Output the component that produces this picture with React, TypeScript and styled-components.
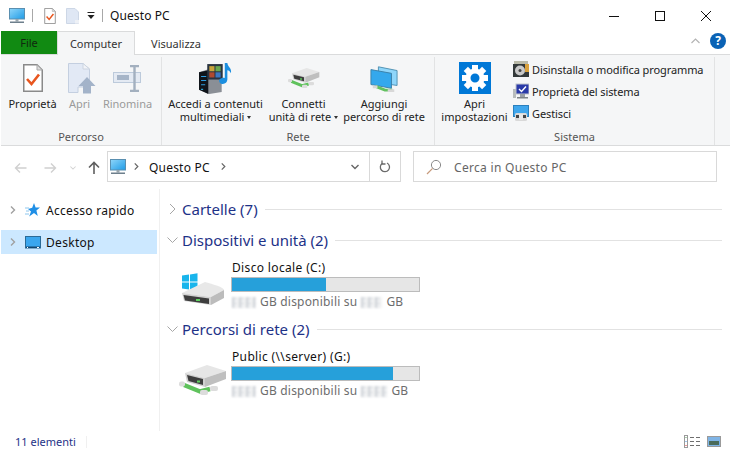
import styled, { createGlobalStyle } from 'styled-components';

const GlobalStyle = createGlobalStyle`
  html, body {
    margin: 0;
    padding: 0;
    background: #fff;
  }
  * {
    box-sizing: border-box;
  }
`;

const Window = styled.div`
  width: 730px;
  height: 454px;
  overflow: hidden;
  display: flex;
  flex-direction: column;
  background: #fff;
  color: #222;
  font-family: "Noto Sans", "Open Sans", sans-serif;
  font-size: 11px;
`;

const TitleBar = styled.div`
  height: 31px;
  display: flex;
  align-items: center;
  padding-left: 9px;
`;

const QuickSep = styled.div<{ $gap?: number }>`
  width: 1px;
  height: 13px;
  background: #a8a8a8;
  margin: 0 ${(p) => p.$gap ?? 11}px 0 7px;
`;

const QuickSlot = styled.span<{ $right: number }>`
  display: flex;
  margin-right: ${(p) => p.$right}px;
`;

const TitleText = styled.span`
  font-size: 12px;
  color: #111;
  letter-spacing: 0.1px;
`;

const WindowControls = styled.div`
  margin-left: auto;
  display: flex;
  height: 100%;
  padding-right: 1px;
`;

const WindowButton = styled.div`
  width: 46px;
  display: flex;
  align-items: center;
  justify-content: center;
`;

const TabRow = styled.div`
  height: 24px;
  display: flex;
  padding-left: 1px;
  position: relative;
`;

const FileTab = styled.div`
  width: 56px;
  height: 23px;
  background: #118a12;
  display: flex;
  align-items: center;
  justify-content: center;
  color: #10290f;
`;

const Tab = styled.div<{ $active?: boolean }>`
  width: ${(p) => (p.$active ? 78 : 82)}px;
  height: 24px;
  display: flex;
  align-items: center;
  justify-content: center;
  color: #333;
  background: ${(p) => (p.$active ? '#f5f6f7' : 'transparent')};
  border: 1px solid ${(p) => (p.$active ? '#dadbdc' : 'transparent')};
  border-bottom: 0;
  position: relative;
  z-index: 1;
`;

const TabRight = styled.div`
  margin-left: auto;
  display: flex;
  align-items: center;
  gap: 10px;
  padding: 0 4px 4px 0;
`;

const Ribbon = styled.div`
  height: 92px;
  margin-top: -1px;
  background: #f5f6f7;
  border-top: 1px solid #dadbdc;
  border-bottom: 1px solid #dadbdc;
  margin-left: 1px;
  display: flex;
  padding-top: 2px;
`;

const Group = styled.div<{ $width: number }>`
  width: ${(p) => p.$width}px;
  height: 88px;
  display: flex;
  flex-direction: column;
  border-right: 1px solid #e2e3e4;
`;

const GroupBody = styled.div<{ $pad?: number }>`
  flex: 1;
  display: flex;
  padding-left: ${(p) => p.$pad ?? 0}px;
`;

const GroupLabel = styled.div`
  height: 16px;
  text-align: center;
  color: #555;
  line-height: 16px;
`;

const BigButton = styled.div<{ $width: number; $disabled?: boolean }>`
  width: ${(p) => p.$width}px;
  display: flex;
  flex-direction: column;
  align-items: center;
  padding-top: 5px;
  color: ${(p) => (p.$disabled ? '#9a9a9a' : '#222')};
`;

const BigIcon = styled.div<{ $shift?: number }>`
  height: 32px;
  display: flex;
  align-items: center;
  justify-content: center;
  margin-bottom: 3px;
  margin-left: ${(p) => p.$shift ?? 0}px;
`;

const BigLabel = styled.div`
  text-align: center;
  line-height: 13px;
  white-space: nowrap;
`;

const Caret = styled.span`
  display: inline-block;
  width: 0;
  height: 0;
  margin-left: 3px;
  vertical-align: 2px;
  border-left: 2.5px solid transparent;
  border-right: 2.5px solid transparent;
  border-top: 3px solid #333;
`;

const SmallList = styled.div`
  display: flex;
  flex-direction: column;
  padding-top: 4px;
  gap: 6px;
`;

const SmallItem = styled.div`
  display: flex;
  align-items: center;
  gap: 3px;
  height: 16px;
  white-space: nowrap;
  letter-spacing: -0.1px;
`;

const NavBar = styled.div`
  height: 43px;
  display: flex;
  align-items: center;
  padding: 0 13px 2px 0;
`;

const NavButtons = styled.div`
  width: 107px;
  display: flex;
  align-items: center;
  padding: 2px 0 0 13px;
`;

const NavSlot = styled.div<{ $width: number; $left?: number }>`
  width: ${(p) => p.$width}px;
  margin-left: ${(p) => p.$left ?? 0}px;
  display: flex;
  justify-content: center;
`;

const AddressBox = styled.div`
  width: 294px;
  height: 31px;
  border: 1px solid #d9d9d9;
  display: flex;
  align-items: center;
  padding: 0 0 0 2px;
`;

const AddressChevron = styled.span<{ $left: number }>`
  display: flex;
  margin-left: ${(p) => p.$left}px;
`;

const Crumb = styled.span`
  font-size: 12px;
  color: #111;
  letter-spacing: 0.2px;
  margin: 1px 0 0 9px;
`;

const AddressEnd = styled.div`
  margin-left: auto;
  display: flex;
  height: 100%;
  align-items: center;
`;

const AddressSlot = styled.div<{ $divided?: boolean }>`
  width: ${(p) => (p.$divided ? 31 : 28)}px;
  height: 100%;
  display: flex;
  align-items: center;
  justify-content: center;
  border-left: ${(p) => (p.$divided ? '1px solid #d9d9d9' : '0')};
`;

const SearchBox = styled.div`
  margin-left: 12px;
  flex: 1;
  height: 31px;
  border: 1px solid #d9d9d9;
  display: flex;
  align-items: center;
  padding: 1px 0 0 12px;
  gap: 12px;
  font-size: 12px;
  letter-spacing: 0.3px;
  color: #666;
`;

const Main = styled.div`
  flex: 1;
  display: flex;
  min-height: 0;
`;

const Sidebar = styled.div`
  width: 160px;
  border-right: 1px solid #f0f0f0;
  padding: 9px 2px 0 1px;
`;

const TreeRow = styled.div<{ $selected?: boolean }>`
  height: 24px;
  display: flex;
  align-items: center;
  padding-left: 8px;
  margin-bottom: 8px;
  font-size: 12px;
  letter-spacing: 0.3px;
  color: #111;
  background: ${(p) => (p.$selected ? '#cce8ff' : 'transparent')};
`;

const TreeIcon = styled.span`
  width: 17px;
  margin-left: 7px;
  margin-right: 5px;
  display: flex;
  justify-content: center;
`;

const Content = styled.div`
  flex: 1;
  padding: 10px 8px 0 7px;
`;

const SectionHead = styled.div`
  height: 20px;
  display: flex;
  align-items: center;
  font-size: 15px;
  color: #1e3287;
  white-space: nowrap;
`;

const SectionChevron = styled.span`
  width: 11px;
  margin-right: 4px;
  display: flex;
  justify-content: center;
`;

const SectionTitle = styled.span`
  margin-right: 7px;
`;

const SectionRule = styled.div`
  flex: 1;
  height: 1px;
  background: #e2e2e2;
`;

const SectionGap = styled.div`
  height: 11px;
`;

const Drive = styled.div`
  display: flex;
  padding: 8px 0 0 6px;
  height: 69px;
`;

const DriveIcon = styled.div<{ $left: number; $top: number }>`
  width: 58px;
  padding-left: ${(p) => p.$left}px;
  padding-top: ${(p) => p.$top}px;
`;

const DriveInfo = styled.div`
  width: 189px;
  display: flex;
  flex-direction: column;
`;

const DriveName = styled.div`
  font-size: 12px;
  letter-spacing: 0.35px;
  color: #111;
  line-height: 19px;
  padding-left: 1px;
`;

const Bar = styled.div`
  height: 15px;
  flex: none;
  border: 1px solid #bcbcbc;
  background: #e6e6e6;
`;

const BarFill = styled.div`
  height: 100%;
  background: #26a0da;
`;

const DriveSpace = styled.div`
  display: flex;
  align-items: center;
  gap: 4px;
  padding-left: 1px;
  font-size: 12px;
  letter-spacing: 0.2px;
  color: #6d6d6d;
  line-height: 20px;
`;

const Redacted = styled.span<{ $w: number }>`
  display: inline-block;
  width: ${(p) => p.$w}px;
  height: 11px;
  background-color: #e4e7ea;
  background-image:
    linear-gradient(90deg, #cfd3d8 33%, transparent 33%, transparent 66%, #f4f4f4 66%),
    linear-gradient(0deg, rgba(255, 255, 255, 0.5) 50%, transparent 50%);
  background-size: 7px 7px, 5px 5px;
  filter: blur(0.8px);
`;

const StatusBar = styled.div`
  height: 23px;
  display: flex;
  align-items: center;
  padding: 0 9px 2px 15px;
  color: #1e3287;
`;

const StatusSep = styled.div`
  width: 1px;
  height: 12px;
  margin-left: 10px;
  background: #f0f0f0;
`;

const StatusRight = styled.div`
  margin-left: auto;
  display: flex;
  align-items: center;
  gap: 7px;
`;

const HelpBadge = styled.div`
  width: 16px;
  height: 16px;
  border-radius: 50%;
  background: #0a62b5;
  color: #fff;
  font-weight: 700;
  font-size: 12px;
  line-height: 16px;
  text-align: center;
`;

const MonitorIcon = () => (
  <svg width="16" height="16" viewBox="0 0 16 16">
    <defs>
      <linearGradient id="mon" x1="0" y1="0" x2="1" y2="1">
        <stop offset="0" stopColor="#8fd6fa" />
        <stop offset="1" stopColor="#1e9be6" />
      </linearGradient>
    </defs>
    <rect x="0.5" y="0.5" width="15" height="10.5" fill="url(#mon)" stroke="#5a8fb0" />
    <rect x="6.5" y="11" width="3" height="2.5" fill="#9aa6ad" />
    <rect x="1" y="13.5" width="14" height="1.5" fill="#6d7f8c" />
  </svg>
);

const DocCheck = ({ w, h }: { w: number; h: number }) => (
  <svg width={w} height={h} viewBox="0 0 20 28">
    <path d="M0.75 0.75H14L19.25 6V27.25H0.75Z" fill="#fff" stroke="#8a8a8a" strokeWidth="1.5" />
    <path d="M14 0.75V6H19.25Z" fill="#dcdcdc" stroke="#a8a8a8" />
    <path d="M4 15L8.5 20L16 10.5" fill="none" stroke="#e8561f" strokeWidth="2.6" />
  </svg>
);

const QuickBlank = () => (
  <svg width="13" height="16" viewBox="0 0 13 16">
    <path d="M0.5 0.5H9L12.5 4V15.5H0.5Z" fill="#dfe7f4" stroke="#cdd7e6" />
    <path d="M9 12H13V15.5H9Z" fill="#eef1f6" />
  </svg>
);

const QuickCaret = () => (
  <svg width="8" height="8" viewBox="0 0 8 8">
    <rect x="0.5" y="0" width="7" height="1" fill="#222" />
    <path d="M0.5 3H7.5L4 7Z" fill="#222" />
  </svg>
);

const OpenIcon = () => (
  <svg width="28" height="31" viewBox="0 0 28 31">
    <path d="M0.5 0.5H15L21.5 6V24H10V29.5H0.5Z" fill="#e2e9f5" stroke="#c4cfe0" />
    <path d="M15 0.5V6H21.5Z" fill="#f2f4f8" stroke="#ccd4e0" />
    <path d="M19 14L27.5 23H23V30.5H15V23H10.5Z" fill="#a3b3c9" />
  </svg>
);

const RenameIcon = () => (
  <svg width="29" height="27" viewBox="0 0 29 27">
    <rect x="0.5" y="7.5" width="27" height="10" fill="#e4eaf3" stroke="#bccadb" />
    <rect x="4" y="10" width="12" height="5" fill="#a6b5c8" />
    <path d="M17 1H26M17 26H26M21.5 1V26" stroke="#a3b0bf" strokeWidth="2.4" fill="none" />
  </svg>
);

const MediaIcon = () => (
  <svg width="33" height="31" viewBox="0 0 32 30">
    <path d="M0 9L9 6L22 11V28L10 30L0 26Z" fill="#8a8f96" />
    <path d="M0 9L9 7V30L0 26Z" fill="#10151b" />
    <path d="M2 13H7M2 17H7M2 21H6" stroke="#2f9de0" strokeWidth="1" />
    <rect x="2" y="25" width="2" height="1" fill="#35c0ff" />
    <rect x="8" y="1" width="15" height="15" fill="#2a3440" />
    <rect x="10" y="3" width="5" height="5" fill="#c8a43a" />
    <rect x="16" y="3" width="5" height="5" fill="#6aa84f" />
    <rect x="10" y="9" width="5" height="5" fill="#b04a2f" />
    <rect x="16" y="9" width="5" height="5" fill="#3c78c0" />
    <path d="M25 0H27.5C28 4 32 5 31 10C30 8 29 7 27.5 7V16C27.5 19 24.5 21 21.5 20C19 19 19 16 21 15C22.5 14 24 14 25 14.5Z" fill="#1c8fe0" />
  </svg>
);

const NetDiskIcon = ({ w, h }: { w: number; h: number }) => (
  <svg width={w} height={h} viewBox="0 0 48 30">
    <path d="M6 8L28 0L47 6L26 13Z" fill="#e6e6e6" />
    <path d="M6 8L26 13V22L8 17Z" fill="#d0d0d0" />
    <path d="M8 10L24 14V20L9.5 16Z" fill="#3e3e3e" />
    <path d="M26 13L47 6V14L26 22Z" fill="#bfbfbf" />
    <rect x="18" y="15.5" width="3" height="2" fill="#5fd35f" />
    <path d="M5 20L21 26.5L31 24" stroke="#5fc25c" strokeWidth="4.5" fill="none" />
    <rect x="0" y="16.5" width="6" height="5" rx="2" fill="#dcdcdc" />
    <rect x="21" y="25" width="8" height="5" rx="2" fill="#dcdcdc" />
    <rect x="31" y="21" width="8" height="5" rx="2" fill="#dcdcdc" />
  </svg>
);

const AddNetIcon = () => (
  <svg width="28" height="32" viewBox="0 -4 30 34">
    <path d="M9 1L29 5V21L9 18Z" fill="#8fd6fa" stroke="#4d8fb0" />
    <path d="M1 4L23 8V24L1 20Z" fill="#34a8ec" stroke="#3b7fa6" />
    <path d="M6 22L16 26H24" stroke="#62c060" strokeWidth="3" fill="none" />
    <rect x="3" y="21" width="5" height="3" fill="#d8d8d8" />
    <rect x="19" y="25" width="7" height="3" fill="#d8d8d8" />
  </svg>
);

const GearIcon = () => (
  <svg width="32" height="32" viewBox="0 0 32 32">
    <rect width="32" height="32" fill="#0078d7" />
    <g transform="translate(16 16)">
      {[0, 45, 90, 135, 180, 225, 270, 315].map((a) => (
        <rect key={a} x="-3" y="-13" width="6" height="7" fill="#fff" transform={`rotate(${a})`} />
      ))}
      <circle r="7" fill="none" stroke="#fff" strokeWidth="5" />
    </g>
  </svg>
);

const UninstallIcon = () => (
  <svg width="16" height="16" viewBox="0 0 16 16">
    <rect x="1" y="0" width="14" height="3" fill="#b9b9a8" />
    <rect x="0" y="3" width="16" height="13" fill="#33393a" />
    <rect x="12" y="3" width="4" height="8" fill="#d9a13c" />
    <circle cx="7" cy="9.5" r="5" fill="#c9c9c9" />
    <circle cx="7" cy="9.5" r="1.5" fill="#444" />
  </svg>
);

const SysPropIcon = () => (
  <svg width="16" height="16" viewBox="0 0 16 16">
    <rect x="0" y="6" width="3" height="9" fill="#b8bcbc" />
    <rect x="3" y="1" width="13" height="10" fill="#2a3aa8" stroke="#c0c4cc" />
    <path d="M6 6L8.5 8.5L13 3.5" stroke="#fff" strokeWidth="1.4" fill="none" />
    <rect x="7" y="11" width="5" height="3" fill="#9aa0a6" />
    <rect x="4" y="14" width="11" height="1.5" fill="#7e8488" />
  </svg>
);

const ManageIcon = () => (
  <svg width="16" height="16" viewBox="0 0 16 16">
    <rect x="0.5" y="0.5" width="15" height="11" fill="#3fa6ec" stroke="#2b80bd" />
    <rect x="2" y="8" width="12" height="8" rx="1.5" fill="#d9d9d9" />
    <rect x="3" y="10" width="10" height="3" fill="#444" />
    <rect x="6" y="9" width="4" height="6" fill="#e8e8e8" />
  </svg>
);

const Chevron = ({ dir, color = '#a0a0a0', size = 8 }: { dir: 'right' | 'down'; color?: string; size?: number }) => (
  <svg width={size} height={size} viewBox="0 0 8 8">
    <path d={dir === 'right' ? 'M2 0.5L5.5 4L2 7.5' : 'M0.5 2L4 5.5L7.5 2'} fill="none" stroke={color} strokeWidth="1.4" />
  </svg>
);

const SectionArrow = ({ open }: { open?: boolean }) => (
  <svg width="11" height="12" viewBox="0 0 11 12">
    <path d={open ? 'M0.5 3.5L5.5 8.5L10.5 3.5' : 'M3 1L8 6L3 11'} fill="none" stroke="#a6a6a6" strokeWidth="1" />
  </svg>
);

const BackIcon = () => (
  <svg width="13" height="12" viewBox="0 0 13 12">
    <path d="M12.5 6H1.5M6 1.5L1.5 6L6 10.5" fill="none" stroke="#d0d0d0" strokeWidth="1.4" />
  </svg>
);

const ForwardIcon = () => (
  <svg width="13" height="12" viewBox="0 0 13 12">
    <path d="M0.5 6H11.5M7 1.5L11.5 6L7 10.5" fill="none" stroke="#d0d0d0" strokeWidth="1.4" />
  </svg>
);

const ArrowUp = () => (
  <svg width="12" height="13" viewBox="0 0 12 13">
    <path d="M6 13V1.5M1 6.5L6 1.5L11 6.5" fill="none" stroke="#5f5f5f" strokeWidth="1.6" />
  </svg>
);

const RefreshIcon = () => (
  <svg width="12" height="13" viewBox="0 0 12 13">
    <path d="M3.5 3.2A4.6 4.6 0 1 0 8 3" fill="none" stroke="#6a6a6a" strokeWidth="1.3" />
    <path d="M3 0.5V4H6.5" fill="none" stroke="#6a6a6a" strokeWidth="1.3" />
  </svg>
);

const SearchIcon = () => (
  <svg width="16" height="16" viewBox="0 0 16 16">
    <circle cx="10" cy="6" r="4.6" fill="none" stroke="#8a8a8a" />
    <path d="M6.6 9.4L1 15" stroke="#c79a7c" strokeWidth="1.2" />
  </svg>
);

const StarIcon = () => (
  <svg width="15" height="14" viewBox="0 0 15 14">
    <path d="M9 0L10.6 4.6H15L11.4 7.6L12.8 13L9 10L4.2 13.6L6 8.4L3 6L7.2 4.8Z" fill="#1f8fe6" />
    <path d="M0 5H4M1 8H4M0 11H4" stroke="#8cc6ee" strokeWidth="1" />
  </svg>
);

const DesktopIcon = () => (
  <svg width="16" height="13" viewBox="0 0 16 13">
    <rect x="0.5" y="0.5" width="15" height="11.5" fill="#3aa6ee" stroke="#2a6a96" />
    <rect x="1" y="10.5" width="14" height="1.5" fill="#14466e" />
    <path d="M2 11.5H3M12 11.5H14" stroke="#fff" strokeWidth="1" />
  </svg>
);

const LocalDiskIcon = () => (
  <svg width="44" height="33" viewBox="0 0 44 33">
    <path d="M1 2.5L8 1.5V8.5H1ZM9 1.4L16.5 0.3V8.5H9ZM1 9.5H8V16.5L1 15.5ZM9 9.5H16.5V17.7L9 16.6Z" fill="#19b5ec" />
    <path d="M1 20L24 9Q43 14 43 17L30 24Z" fill="#e8e8e8" />
    <path d="M1 20L30 24V32L3 28Z" fill="#d2d2d2" />
    <path d="M2.5 22L28 25.5V31L4 27.5Z" fill="#3e3e3e" />
    <path d="M30 24L43 17V25L30 32Z" fill="#bcbcbc" />
    <rect x="15" y="26" width="4" height="2" fill="#5fd35f" />
  </svg>
);

const DetailsViewIcon = () => (
  <svg width="16" height="13" viewBox="0 0 16 13">
    <rect x="0.5" y="0.5" width="3" height="12" fill="#fff" stroke="#9a9a9a" />
    <rect x="1.5" y="2" width="1" height="1" fill="#5aa05a" />
    <rect x="1.5" y="6" width="1" height="1" fill="#3f8fe0" />
    <rect x="1.5" y="10" width="1" height="1" fill="#e03030" />
    <path d="M6 2.5H10M12 2.5H16M6 6.5H10M12 6.5H16M6 10.5H10M12 10.5H16" stroke="#6e6e6e" />
  </svg>
);

const TilesViewIcon = () => (
  <svg width="14" height="11" viewBox="0 0 14 11">
    <rect x="0.5" y="0.5" width="13" height="10" fill="#7fb4e6" stroke="#9a9a9a" />
    <rect x="2" y="5" width="10" height="4" fill="#4a6b5a" />
  </svg>
);

const CloseIcon = () => (
  <svg width="10" height="10" viewBox="0 0 10 10">
    <path d="M0 0L10 10M10 0L0 10" stroke="#111" strokeWidth="1" />
  </svg>
);

const MaximizeIcon = () => (
  <svg width="10" height="10" viewBox="0 0 10 10">
    <rect x="0.5" y="0.5" width="9" height="9" fill="none" stroke="#111" />
  </svg>
);

const MinimizeIcon = () => (
  <svg width="10" height="10" viewBox="0 0 10 10">
    <path d="M0 5.5H10" stroke="#111" />
  </svg>
);

const CollapseIcon = () => (
  <svg width="9" height="6" viewBox="0 0 9 6">
    <path d="M0.5 5L4.5 1L8.5 5" fill="none" stroke="#b4b4b4" strokeWidth="1.2" />
  </svg>
);

export default function App() {
  return (
    <Window>
      <GlobalStyle />
      <TitleBar>
        <MonitorIcon />
        <QuickSep />
        <QuickSlot $right={10}><DocCheck w={12} h={16} /></QuickSlot>
        <QuickSlot $right={8}><QuickBlank /></QuickSlot>
        <QuickCaret />
        <QuickSep $gap={7} />
        <TitleText>Questo PC</TitleText>
        <WindowControls>
          <WindowButton><MinimizeIcon /></WindowButton>
          <WindowButton><MaximizeIcon /></WindowButton>
          <WindowButton><CloseIcon /></WindowButton>
        </WindowControls>
      </TitleBar>

      <TabRow>
        <FileTab>File</FileTab>
        <Tab $active>Computer</Tab>
        <Tab>Visualizza</Tab>
        <TabRight>
          <CollapseIcon />
          <HelpBadge>?</HelpBadge>
        </TabRight>
      </TabRow>

      <Ribbon>
        <Group $width={161}>
          <GroupBody $pad={3}>
            <BigButton $width={57}>
              <BigIcon><DocCheck w={20} h={28} /></BigIcon>
              <BigLabel>Proprietà</BigLabel>
            </BigButton>
            <BigButton $width={37} $disabled>
              <BigIcon $shift={5}><OpenIcon /></BigIcon>
              <BigLabel>Apri</BigLabel>
            </BigButton>
            <BigButton $width={59} $disabled>
              <BigIcon><RenameIcon /></BigIcon>
              <BigLabel>Rinomina</BigLabel>
            </BigButton>
          </GroupBody>
          <GroupLabel>Percorso</GroupLabel>
        </Group>
        <Group $width={273}>
          <GroupBody $pad={2}>
            <BigButton $width={103}>
              <BigIcon><MediaIcon /></BigIcon>
              <BigLabel>Accedi a contenuti<br />multimediali<Caret /></BigLabel>
            </BigButton>
            <BigButton $width={73}>
              <BigIcon><NetDiskIcon w={32} h={20} /></BigIcon>
              <BigLabel>Connetti<br />unità di rete<Caret /></BigLabel>
            </BigButton>
            <BigButton $width={88}>
              <BigIcon><AddNetIcon /></BigIcon>
              <BigLabel>Aggiungi<br />percorso di rete</BigLabel>
            </BigButton>
          </GroupBody>
          <GroupLabel>Rete</GroupLabel>
        </Group>
        <Group $width={280}>
          <GroupBody $pad={1}>
            <BigButton $width={77}>
              <BigIcon><GearIcon /></BigIcon>
              <BigLabel>Apri<br />impostazioni</BigLabel>
            </BigButton>
            <SmallList>
              <SmallItem><UninstallIcon />Disinstalla o modifica programma</SmallItem>
              <SmallItem><SysPropIcon />Proprietà del sistema</SmallItem>
              <SmallItem><ManageIcon />Gestisci</SmallItem>
            </SmallList>
          </GroupBody>
          <GroupLabel>Sistema</GroupLabel>
        </Group>
      </Ribbon>

      <NavBar>
        <NavButtons>
          <NavSlot $width={15}><BackIcon /></NavSlot>
          <NavSlot $width={30} $left={7}><ForwardIcon /></NavSlot>
          <NavSlot $width={16}><Chevron dir="down" color="#d4d4d4" size={6} /></NavSlot>
          <NavSlot $width={26}><ArrowUp /></NavSlot>
        </NavButtons>
        <AddressBox>
          <MonitorIcon />
          <AddressChevron $left={7}><Chevron dir="right" color="#666" size={7} /></AddressChevron>
          <Crumb>Questo PC</Crumb>
          <AddressChevron $left={10}><Chevron dir="right" color="#666" size={7} /></AddressChevron>
          <AddressEnd>
            <AddressSlot><Chevron dir="down" color="#666" /></AddressSlot>
            <AddressSlot $divided><RefreshIcon /></AddressSlot>
          </AddressEnd>
        </AddressBox>
        <SearchBox>
          <SearchIcon />
          Cerca in Questo PC
        </SearchBox>
      </NavBar>

      <Main>
        <Sidebar>
          <TreeRow>
            <Chevron dir="right" />
            <TreeIcon><StarIcon /></TreeIcon>
            Accesso rapido
          </TreeRow>
          <TreeRow $selected>
            <Chevron dir="right" />
            <TreeIcon><DesktopIcon /></TreeIcon>
            Desktop
          </TreeRow>
        </Sidebar>
        <Content>
          <SectionHead>
            <SectionChevron><SectionArrow /></SectionChevron>
            <SectionTitle>Cartelle (7)</SectionTitle>
            <SectionRule />
          </SectionHead>
          <SectionGap />
          <SectionHead>
            <SectionChevron><SectionArrow open /></SectionChevron>
            <SectionTitle>Dispositivi e unità (2)</SectionTitle>
            <SectionRule />
          </SectionHead>
          <Drive>
            <DriveIcon $left={8} $top={15}><LocalDiskIcon /></DriveIcon>
            <DriveInfo>
              <DriveName>Disco locale (C:)</DriveName>
              <Bar><BarFill style={{ width: '50%' }} /></Bar>
              <DriveSpace><Redacted $w={24} />GB disponibili su <Redacted $w={21} />GB</DriveSpace>
            </DriveInfo>
          </Drive>
          <SectionHead>
            <SectionChevron><SectionArrow open /></SectionChevron>
            <SectionTitle>Percorsi di rete (2)</SectionTitle>
            <SectionRule />
          </SectionHead>
          <Drive>
            <DriveIcon $left={6} $top={18}><NetDiskIcon w={48} h={30} /></DriveIcon>
            <DriveInfo>
              <DriveName>Public (\\server) (G:)</DriveName>
              <Bar><BarFill style={{ width: '86%' }} /></Bar>
              <DriveSpace><Redacted $w={24} />GB disponibili su <Redacted $w={26} />GB</DriveSpace>
            </DriveInfo>
          </Drive>
        </Content>
      </Main>

      <StatusBar>
        11 elementi
        <StatusSep />
        <StatusRight>
          <DetailsViewIcon />
          <TilesViewIcon />
        </StatusRight>
      </StatusBar>
    </Window>
  );
}
